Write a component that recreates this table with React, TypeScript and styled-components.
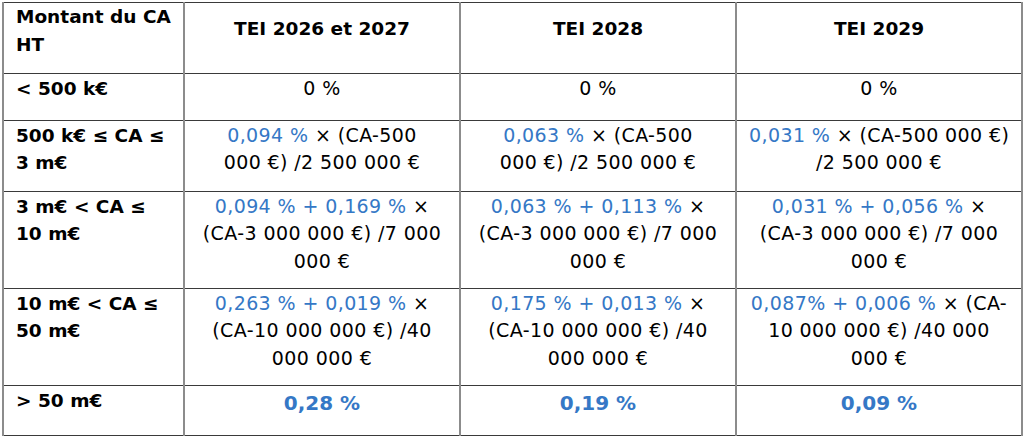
import React from "react";
import styled, { createGlobalStyle } from "styled-components";

const Global = createGlobalStyle`
  html, body { margin: 0; padding: 0; background: #ffffff; }
  body { font-family: "DejaVu Sans", Verdana, sans-serif; color: #000; }
`;

const Page = styled.div`
  padding: 2px 0 0 2px;
`;

const Table = styled.table`
  border-collapse: collapse;
  table-layout: fixed;
  width: 1019px;
  font-size: 18.5px;
  line-height: 27.75px;
`;

const Row = styled.tr<{ $h: number }>`
  height: ${(p) => p.$h}px;
`;

const Cell = styled.td<{ $head?: boolean; $label?: boolean; $pt?: number }>`
  border-top: 1px solid #3a3a3a;
  border-bottom: 1px solid #3a3a3a;
  border-left: 2px solid #8c8c8c;
  border-right: 2px solid #8c8c8c;
  padding: ${(p) =>
    p.$head ? (p.$label ? "0 12px 14px" : "0 12px 18px") : `${p.$pt ?? 1}px 12px 0`};
  vertical-align: ${(p) => (p.$head ? "middle" : "top")};
  text-align: ${(p) => (p.$label ? "left" : "center")};
  font-weight: ${(p) => (p.$head || p.$label ? 700 : 400)};
  ${(p) => (!p.$head && !p.$label ? "font-size: 19px; letter-spacing: 0.4px;" : "")}
`;

const Line = styled.span`
  display: block;
  white-space: nowrap;
`;

const Blue = styled.span`
  color: #3578c6;
`;

const Big = styled.span`
  display: block;
  color: #3578c6;
  font-weight: 700;
  font-size: 20px;
  letter-spacing: 0;
  line-height: 30px;
`;

type Cellish = React.ReactNode[];

const rows: { h: number; label: string[]; cells: Cellish[][] }[] = [
  {
    h: 47,
    label: ["< 500 k€"],
    cells: [[["0 %"]], [["0 %"]], [["0 %"]]],
  },
  {
    h: 71,
    label: ["500 k€ ≤ CA ≤", "3 m€"],
    cells: [
      [[<Blue key="b">0,094 %</Blue>, " × (CA-500"], ["000 €) /2 500 000 €"]],
      [[<Blue key="b">0,063 %</Blue>, " × (CA-500"], ["000 €) /2 500 000 €"]],
      [[<Blue key="b">0,031 %</Blue>, " × (CA-500 000 €)"], ["/2 500 000 €"]],
    ],
  },
  {
    h: 97,
    label: ["3 m€ < CA ≤", "10 m€"],
    cells: [
      [[<Blue key="b">0,094 % + 0,169 %</Blue>, " ×"], ["(CA-3 000 000 €) /7 000"], ["000 €"]],
      [[<Blue key="b">0,063 % + 0,113 %</Blue>, " ×"], ["(CA-3 000 000 €) /7 000"], ["000 €"]],
      [[<Blue key="b">0,031 % + 0,056 %</Blue>, " ×"], ["(CA-3 000 000 €) /7 000"], ["000 €"]],
    ],
  },
  {
    h: 97,
    label: ["10 m€ < CA ≤", "50 m€"],
    cells: [
      [[<Blue key="b">0,263 % + 0,019 %</Blue>, " ×"], ["(CA-10 000 000 €) /40"], ["000 000 €"]],
      [[<Blue key="b">0,175 % + 0,013 %</Blue>, " ×"], ["(CA-10 000 000 €) /40"], ["000 000 €"]],
      [[<Blue key="b">0,087% + 0,006 %</Blue>, " × (CA-"], ["10 000 000 €) /40 000"], ["000 €"]],
    ],
  },
];

export default function App() {
  return (
    <Page>
      <Global />
      <Table>
        <colgroup>
          <col style={{ width: 181 }} />
          <col style={{ width: 276 }} />
          <col style={{ width: 276 }} />
          <col style={{ width: 286 }} />
        </colgroup>
        <tbody>
          <Row $h={70}>
            <Cell $head $label>
              <Line>Montant du CA</Line>
              <Line>HT</Line>
            </Cell>
            <Cell $head>TEI 2026 et 2027</Cell>
            <Cell $head>TEI 2028</Cell>
            <Cell $head>TEI 2029</Cell>
          </Row>
          {rows.map((r, i) => (
            <Row key={i} $h={r.h}>
              <Cell $label>
                {r.label.map((l, j) => (
                  <Line key={j}>{l}</Line>
                ))}
              </Cell>
              {r.cells.map((c, k) => (
                <Cell key={k}>
                  {c.map((ln, j) => (
                    <Line key={j}>{ln}</Line>
                  ))}
                </Cell>
              ))}
            </Row>
          ))}
          <Row $h={50}>
            <Cell $label>
              <Line>&gt; 50 m€</Line>
            </Cell>
            <Cell $pt={2}>
              <Big>0,28 %</Big>
            </Cell>
            <Cell $pt={2}>
              <Big>0,19 %</Big>
            </Cell>
            <Cell $pt={2}>
              <Big>0,09 %</Big>
            </Cell>
          </Row>
        </tbody>
      </Table>
    </Page>
  );
}
